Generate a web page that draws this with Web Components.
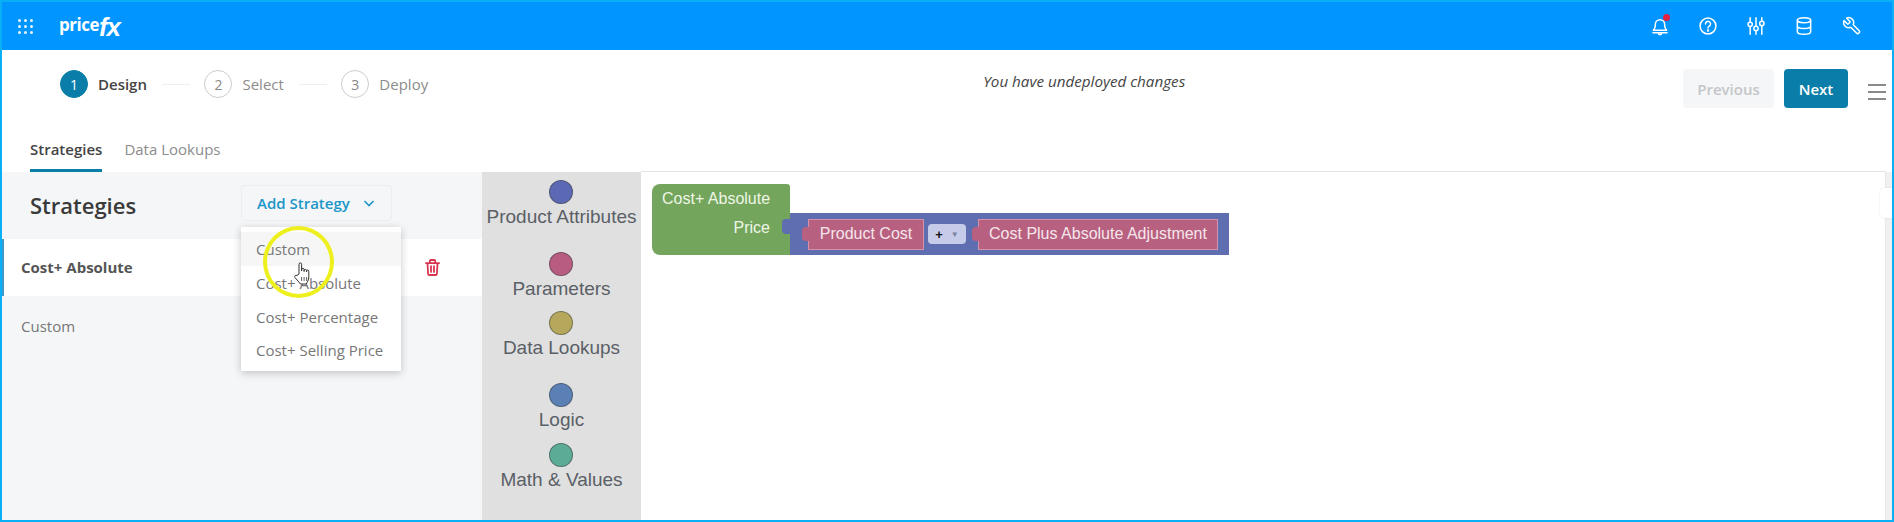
<!DOCTYPE html>
<html lang="en">
<head>
<meta charset="UTF-8">
<title>Pricefx Strategies</title>
<style>
    html, body { margin: 0; height: 522px; overflow: hidden; background: #fff; }
    body { font-family: "Open Sans", "Liberation Sans", sans-serif; }
</style>
</head>
<body>
<pf-app></pf-app>

<script>
// small helper, every element is just a template string in an open shadow root
function define(name, css, html, setup) {
    customElements.define(name, class extends HTMLElement {
        constructor() {
            super();
            this.attachShadow({ mode: 'open' }).innerHTML = `<style>${css}</style>${html}`;
        }
        connectedCallback() { if (setup) setup.call(this); }
    });
}

const ICONS = {
    bell: '<path d="M4 17h16c-1.600-1.500-2.400-3-2.400-5.500V10a5.600 5.600 0 0 0-11.200 0v1.500C6.400 14 5.600 15.500 4 17z"/><path d="M3.500 20h17M10 20.500a2 2 0 0 0 4 0"/>',
    help: '<circle cx="12" cy="12" r="9.500"/><path d="M9 9.500a3 3 0 1 1 4.600 2.500c-1 .7-1.600 1.200-1.600 2.500"/><circle cx="12" cy="17.500" r=".6"/>',
    sliders: '<path d="M5 2v5M5 13v9M12 2v10M12 18v4M19 2v4M19 12v10"/><circle cx="5" cy="10" r="2.600"/><circle cx="12" cy="15" r="2.600"/><circle cx="19" cy="9" r="2.600"/>',
    db: '<ellipse cx="12" cy="5" rx="8" ry="3"/><path d="M4 5v14c0 1.700 3.600 3 8 3s8-1.300 8-3V5M4 12c0 1.700 3.600 3 8 3s8-1.300 8-3"/>',
    wrench: '<path transform="translate(24 0) scale(-1 1)" d="M14.700 6.300a1 1 0 0 0 0 1.400l1.600 1.600a1 1 0 0 0 1.400 0l3.770-3.770a6 6 0 0 1-7.940 7.940l-6.910 6.910a2.120 2.120 0 0 1-3-3l6.910-6.910a6 6 0 0 1 7.940-7.940l-3.760 3.760z"/>'
};

define('pf-icon', `
    :host { display: block; width: 20px; height: 20px; position: relative; }
    svg { display: block; width: 100%; height: 100%; fill: none; stroke: #fff; stroke-width: 1.800; stroke-linecap: round; stroke-linejoin: round; }
    .dot { display: none; position: absolute; width: 7px; height: 7px; right: 0; top: -2px; border-radius: 50%; background: #e0213f; }
    :host([dot]) .dot { display: block; }
`, `<svg viewBox="0 0 24 24"></svg><span class="dot"></span>`, function () {
    this.shadowRoot.querySelector('svg').innerHTML = ICONS[this.getAttribute('name')];
});

define('pf-topbar', `
    :host { display: flex; align-items: center; height: 48px; background: #0095ff; color: #fff; flex: none; }
    .apps { display: grid; grid-template-columns: repeat(3, 3px); gap: 3px 3px; margin-left: 16px; }
    .apps i { width: 3px; height: 3px; border-radius: 50%; background: #e8f5ff; }
    .logo { margin-left: 26px; display: flex; align-items: center; height: 30px; }
    .price { font: 700 17px "Open Sans", sans-serif; letter-spacing: -.5px; margin-top: -3px; }
    .fx { font: italic 700 26px "Liberation Sans", sans-serif; letter-spacing: -1px; margin-top: 3px; }
    .right { margin-left: auto; display: flex; align-items: center; gap: 28px; margin-right: 30px; }
`, `
    <div class="apps"><i></i><i></i><i></i><i></i><i></i><i></i><i></i><i></i><i></i></div>
    <div class="logo"><span class="price">price</span><span class="fx">fx</span></div>
    <div class="right">
        <pf-icon name="bell" dot></pf-icon>
        <pf-icon name="help"></pf-icon>
        <pf-icon name="sliders"></pf-icon>
        <pf-icon name="db"></pf-icon>
        <pf-icon name="wrench"></pf-icon>
    </div>
`);

define('pf-step', `
    :host { display: flex; align-items: center; gap: 10px; font-size: 15px; color: #8c8c8c; }
    .num { width: 26px; height: 26px; border: 1px solid #ccc; border-radius: 50%; display: flex; align-items: center; justify-content: center; font-size: 14px; color: #888; }
    :host([active]) { color: #444; font-weight: 600; }
    :host([active]) .num { background: #0a7ea8; border-color: #0a7ea8; color: #fff; font-weight: 400; }
`, `<span class="num"></span><slot></slot>`, function () {
    this.shadowRoot.querySelector('.num').textContent = this.getAttribute('n');
});

define('pf-stepper', `
    :host { display: flex; align-items: flex-start; height: 87px; box-sizing: border-box; padding: 19px 6px 0 58px; flex: none; }
    .steps { display: flex; align-items: center; height: 30px; }
    .line { width: 28px; height: 1px; background: #eee; margin: 0 14px 0 15.500px; }
    .msg { flex: 1; font-style: italic; font-size: 15.200px; color: #444; padding-left: 555px; margin-top: 2px; white-space: nowrap; }
    .btn { height: 39px; border-radius: 4px; font-size: 15px; font-weight: 600; display: flex; align-items: center; justify-content: center; box-sizing: border-box; }
    .prev { width: 91px; background: #f5f6f7; color: #c4c6c9; margin-right: 10px; }
    .next { width: 64px; background: #0a7ea8; color: #fff; }
    .ham { width: 18px; margin: 15px 0 0 20px; display: flex; flex-direction: column; gap: 5px; }
    .ham i { height: 2px; background: #8a8a8a; }
`, `
    <div class="steps">
        <pf-step n="1" active>Design</pf-step><span class="line"></span>
        <pf-step n="2">Select</pf-step><span class="line"></span>
        <pf-step n="3">Deploy</pf-step>
    </div>
    <div class="msg">You have undeployed changes</div>
    <div class="btn prev">Previous</div>
    <div class="btn next">Next</div>
    <div class="ham"><i></i><i></i><i></i></div>
`);

define('pf-tabs', `
    :host { display: flex; align-items: stretch; height: 35px; gap: 22px; padding-left: 28px; font-size: 15px; color: #8c8c8c; flex: none; box-sizing: border-box; }
    span { display: flex; align-items: flex-start; padding-top: 2px; box-sizing: border-box; }
    .on { color: #444; font-weight: 600; border-bottom: 3px solid #0a7ea8; }
`, `<span class="on">Strategies</span><span>Data Lookups</span>`);

define('pf-dropdown', `
    :host { position: absolute; left: -1px; top: 41px; width: 160px; height: 144px; background: #fff; box-shadow: 0 2px 8px rgba(0,0,0,.22); font-size: 15px; font-weight: 400; color: #777; z-index: 3; display: flex; flex-direction: column; padding-top: 5px; box-sizing: border-box; }
    div { height: 33.500px; display: flex; align-items: center; padding-left: 15px; white-space: nowrap; }
    div + div { position: relative; top: 1px; }
    .hover { background: #f6f6f6; }
`, `<div class="hover">Custom</div><div>Cost+ Absolute</div><div>Cost+ Percentage</div><div>Cost+ Selling Price</div>`);

define('pf-strategies', `
    :host { display: block; background: #f5f6f8; position: relative; min-height: 0; }
    .head { height: 67px; display: flex; align-items: center; padding-left: 28px; box-sizing: border-box; }
    h2 { margin: 0; width: 211px; font-size: 22px; font-weight: 600; color: #3a3a3a; margin-top: -1px; }
    .add { position: relative; width: 151px; height: 36px; margin-top: -5px; border: 1px solid #ebedf0; border-radius: 4px; box-sizing: border-box; display: flex; align-items: center; padding-left: 15px; color: #1a96c8; font-size: 15px; font-weight: 600; white-space: nowrap; }
    .add svg { width: 14px; height: 14px; margin-left: 12px; fill: none; stroke: #1a96c8; stroke-width: 1.600; }
    .row { height: 57px; display: flex; align-items: center; padding-left: 19px; font-size: 15px; color: #777; position: relative; }
    .row span { margin-top: -2px; }
    .row.on { background: #fff; border-left: 2px solid #3b9cc9; font-weight: 700; color: #555; }
    .row.on span { margin-left: -2px; }
    .row.plain { height: 62px; }
    .trash { position: absolute; left: 421px; top: 20px; width: 15px; height: 17px; fill: none; stroke: #d9344f; stroke-width: 2; stroke-linejoin: round; stroke-linecap: round; }
    .halo { position: absolute; left: 261px; top: 54px; width: 71px; height: 72px; box-sizing: border-box; border: 4px solid #eef01e; border-radius: 50%; z-index: 4; pointer-events: none; }
    .hand { position: absolute; left: 291px; top: 89px; width: 18px; height: 24px; z-index: 5; }
`, `
    <div class="head">
        <h2>Strategies</h2>
        <div class="add">Add Strategy
            <svg viewBox="0 0 14 14"><path d="M2.500 5l4.500 4.500L11.500 5"/></svg>
            <pf-dropdown></pf-dropdown>
        </div>
    </div>
    <div class="row on"><span>Cost+ Absolute</span>
        <svg class="trash" viewBox="0 0 17 19"><path d="M1 4.500h15M5.500 4.500V2a1 1 0 0 1 1-1h4a1 1 0 0 1 1 1v2.500M2.800 4.500l.7 12a1.500 1.500 0 0 0 1.500 1.500h7a1.500 1.500 0 0 0 1.500-1.500l.7-12M6.800 8v6.500M10.200 8v6.500"/></svg>
    </div>
    <div class="row plain"><span>Custom</span></div>
    <div class="halo"></div>
    <svg class="hand" viewBox="0 0 18 24"><path d="M6 13V3.200a1.300 1.300 0 0 1 2.600 0V10l.1-1.500a1.200 1.200 0 0 1 2.400 0V10.500l.1-1.300a1.200 1.200 0 0 1 2.300 0v1.800l.1-.9a1.100 1.100 0 0 1 2.200 0V16c0 3-1.500 5-2.500 7H7.500L2 16.500c-1-1.300.6-3 2-2z" fill="#fff" stroke="#333" stroke-width="1" stroke-linejoin="round"/><path d="M8.600 16v4M11.100 16v4M13.600 16v4" stroke="#333" stroke-width=".8"/></svg>
`);

define('pf-category', `
    :host { display: flex; flex-direction: column; align-items: center; font: 19px/25px "Liberation Sans", Arial, sans-serif; color: #5a5f66; white-space: nowrap; }
    i { display: block; width: 24px; height: 24px; box-sizing: border-box; border-radius: 50%; border: 1px solid rgba(70,70,70,.55); background: var(--dot); margin-left: -2px; }
`, `<i></i><slot></slot>`);

define('pf-toolbox', `
    :host { display: block; background: #e0e0e0; padding-top: 8px; box-sizing: border-box; }
`, `<slot></slot>`);

define('pf-canvas', `
    :host { display: block; background: #fff; border-top: 1px solid #e5e5e5; border-right: 1px solid #e8e8e8; margin-top: -1px; font: 16px "Liberation Sans", Arial, sans-serif; position: relative; }
    .stack { display: flex; align-items: stretch; position: absolute; left: 11px; top: 12px; color: #fff; }
    .green { width: 138px; height: 71px; background: #74a55d; border-radius: 8px 3px 0 8px; box-sizing: border-box; padding: 4px 20px 0 10px; color: #eef6e6; }
    .green div { height: 29px; line-height: 21px; white-space: nowrap; }
    .green .r { text-align: right; }
    .blue { align-self: flex-end; position: relative; width: 439px; height: 42px; background: #5e6eb0; display: flex; align-items: center; padding-left: 18px; box-sizing: border-box; }
    .blue::before { content: ""; position: absolute; left: -8px; top: 6px; width: 8px; height: 15px; background: #5e6eb0; border-radius: 4px 0 0 4px; }
    .pink { position: relative; height: 31px; background: #b8607f; border: 1px solid #d493aa; box-sizing: border-box; display: flex; align-items: center; justify-content: center; color: #f5e6ec; white-space: nowrap; }
    .pink::before { content: ""; position: absolute; left: -7px; top: 7px; width: 7px; height: 14px; background: #b8607f; border-radius: 4px 0 0 4px; }
    .op { width: 38px; height: 20px; margin: 0 12px 0 4px; background: #c5cbe8; border-radius: 4px; display: flex; align-items: center; justify-content: center; gap: 8px; color: #111; font-size: 13px; font-weight: 700; }
    .op span { font-size: 8px; color: #7a80a0; font-weight: 400; }
    .tab { position: absolute; right: -7px; top: 16px; width: 12px; height: 30px; background: #fff; border-radius: 5px 0 0 5px; box-shadow: 0 0 2px rgba(0,0,0,.12); }
`, `
    <div class="stack">
        <div class="green"><div>Cost+ Absolute</div><div class="r">Price</div></div>
        <div class="blue">
            <div class="pink" style="width:116px">Product Cost</div>
            <div class="op">+<span>▼</span></div>
            <div class="pink" style="width:240px">Cost Plus Absolute Adjustment</div>
        </div>
    </div>
    <div class="tab"></div>
`);

define('pf-app', `
    :host { display: flex; flex-direction: column; width: 1894px; height: 522px; box-sizing: border-box; border: 2px solid #0ab0f5; background: #fff; overflow: hidden; }
    .main { flex: 1; min-height: 0; display: grid; grid-template-columns: 480px 159px 1245px 1fr; background: #f0f0f0; }
`, `
    <pf-topbar></pf-topbar>
    <pf-stepper></pf-stepper>
    <pf-tabs></pf-tabs>
    <div class="main">
        <pf-strategies></pf-strategies>
        <pf-toolbox>
            <pf-category style="--dot:#5b68b3">Product Attributes</pf-category>
            <pf-category style="--dot:#b85c82;margin-top:23px">Parameters</pf-category>
            <pf-category style="--dot:#b5a85c;margin-top:10px">Data Lookups</pf-category>
            <pf-category style="--dot:#5b80b5;margin-top:23px">Logic</pf-category>
            <pf-category style="--dot:#5bab96;margin-top:11px">Math &amp; Values</pf-category>
        </pf-toolbox>
        <pf-canvas></pf-canvas>
    </div>
`);
</script>
</body>
</html>
